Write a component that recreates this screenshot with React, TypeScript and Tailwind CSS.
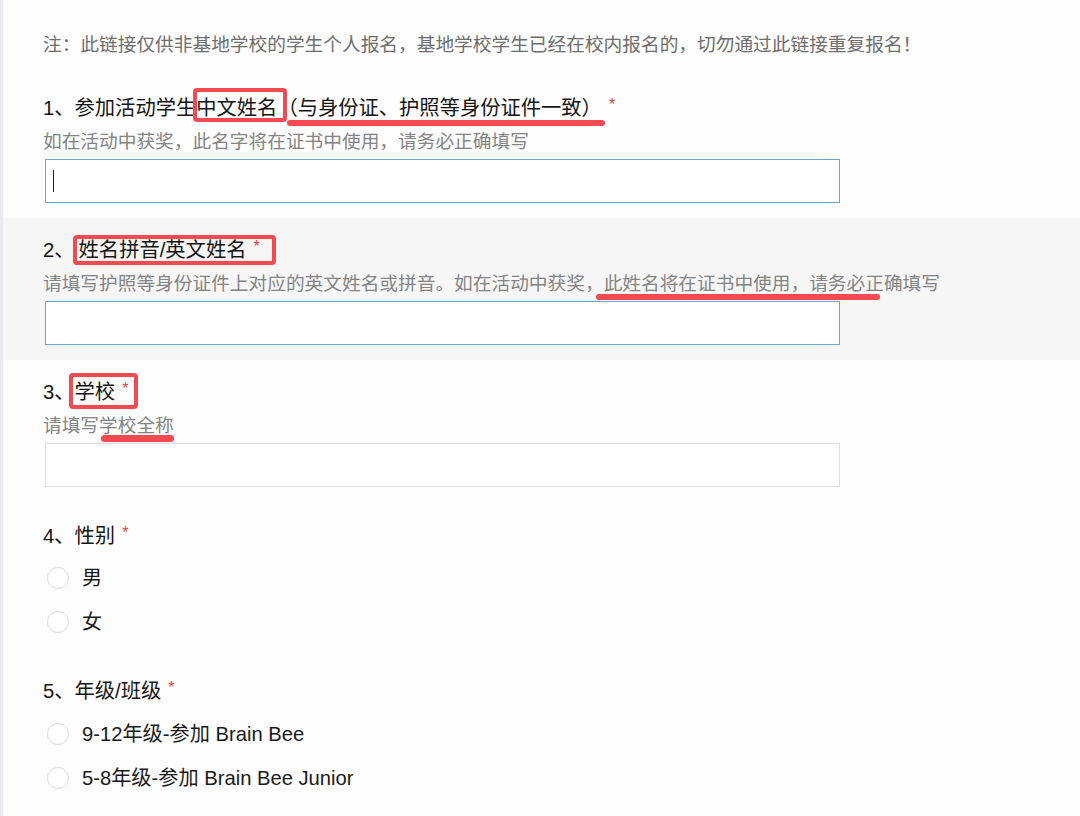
const font = { fontFamily: '"Liberation Sans", "Noto Sans CJK SC", sans-serif' };

function Star() {
  return <span className="ml-[7px] align-top text-[16px] leading-[22px] text-[#dc4247]">*</span>;
}

function Radio({ label }: { label: string }) {
  return (
    <div className="flex h-[44px] items-center">
      <span className="ml-[4px] h-[22px] w-[22px] rounded-full border border-[#dadada] bg-white" />
      <span className="ml-[13px] text-[20.2px] text-[#1a1a1a]">{label}</span>
    </div>
  );
}

function Field({ focused, caret }: { focused?: boolean; caret?: boolean }) {
  return (
    <div
      className={
        "ml-[2px] mt-[3px] flex h-[44px] w-[795px] items-center bg-white border " +
        (focused ? "border-[#6aa6cf]" : "border-[#dedede]")
      }
    >
      {caret && <span className="ml-[7px] h-[22px] w-px bg-[#222]" />}
    </div>
  );
}

export default function App() {
  return (
    <div className="flex min-h-[816px] bg-[#fdfdfd]" style={font}>
      <div className="w-[3px] shrink-0 bg-[#e8e8f2]" />
      <div className="flex-1">
        {/* notice */}
        <div className="px-[40px] pt-[31px] pb-[17px] text-[18.7px] leading-[28px] text-[#6e6e6e]">
          注：此链接仅供非基地学校的学生个人报名，基地学校学生已经在校内报名的，切勿通过此链接重复报名！
        </div>

        {/* 1 */}
        <div className="px-[40px] pt-[18px] pb-[15px]">
          <div className="text-[20.3px] leading-[28px] text-[#151515]">
            1、参加活动学生
            <span className="relative">
              中文姓名
              <span className="absolute -left-[3px] -right-[10px] -top-[9px] -bottom-[3px] rounded-[4px] border-[4px] border-[#f24a50]" />
            </span>
            <span className="relative">
              （与身份证、护照等身份证件一致）
              <span className="absolute left-[10px] -right-[3px] top-[23px] h-[6px] rounded-full bg-[#f24a50]" />
            </span>
            <Star />
          </div>
          <div className="mt-[6px] text-[18.7px] leading-[28px] text-[#848484]">
            如在活动中获奖，此名字将在证书中使用，请务必正确填写
          </div>
          <Field focused caret />
        </div>

        {/* 2 */}
        <div className="bg-[#f6f6f6] px-[40px] pt-[18px] pb-[15px]">
          <div className="text-[20.3px] leading-[28px] text-[#151515]">
            2、
            <span className="relative ml-[4px]">
              姓名拼音/英文姓名
              <Star />
              <span className="absolute -left-[6px] -right-[16px] -top-[4px] -bottom-[4px] rounded-[4px] border-[4px] border-[#f24a50]" />
            </span>
          </div>
          <div className="mt-[6px] text-[18.7px] leading-[28px] text-[#848484]">
            请填写护照等身份证件上对应的英文姓名或拼音。如在活动中获奖，
            <span className="relative">
              此姓名将在证书中使用，请务必正
              <span className="absolute -left-[8px] right-[4px] top-[21px] h-[6px] rounded-full bg-[#f24a50]" />
            </span>
            确填写
          </div>
          <Field focused />
        </div>

        {/* 3 */}
        <div className="px-[40px] pt-[18px] pb-[17px]">
          <div className="text-[20.3px] leading-[28px] text-[#151515]">
            3、
            <span className="relative">
              学校
              <Star />
              <span className="absolute -left-[6px] -right-[10px] -top-[8px] -bottom-[6px] rounded-[4px] border-[4px] border-[#f24a50]" />
            </span>
          </div>
          <div className="mt-[6px] text-[18.7px] leading-[28px] text-[#848484]">
            请填写
            <span className="relative">
              学校全称
              <span className="absolute left-[2px] right-0 top-[20px] h-[7px] rounded-full bg-[#f24a50]" />
            </span>
          </div>
          <Field />
        </div>

        {/* 4 */}
        <div className="px-[40px] pt-[18px] pb-[15px]">
          <div className="text-[20.3px] leading-[28px] text-[#151515]">
            4、性别
            <Star />
          </div>
          <div className="mt-[6px]">
            <Radio label="男" />
            <Radio label="女" />
          </div>
        </div>

        {/* 5 */}
        <div className="px-[40px] pt-[18px] pb-[15px]">
          <div className="text-[20.3px] leading-[28px] text-[#151515]">
            5、年级/班级
            <Star />
          </div>
          <div className="mt-[7px]">
            <Radio label="9-12年级-参加 Brain Bee" />
            <Radio label="5-8年级-参加 Brain Bee Junior" />
          </div>
        </div>
      </div>
    </div>
  );
}
